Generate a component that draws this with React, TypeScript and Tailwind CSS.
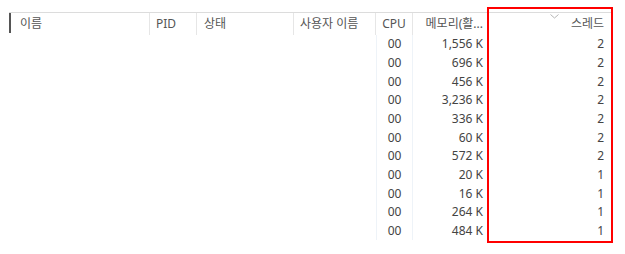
const rows = [
  { mem: '1,556 K', threads: 2 },
  { mem: '696 K', threads: 2 },
  { mem: '456 K', threads: 2 },
  { mem: '3,236 K', threads: 2 },
  { mem: '336 K', threads: 2 },
  { mem: '60 K', threads: 2 },
  { mem: '572 K', threads: 2 },
  { mem: '20 K', threads: 1 },
  { mem: '16 K', threads: 1 },
  { mem: '264 K', threads: 1 },
  { mem: '484 K', threads: 1 },
]

function HeaderCell({ label, className }: { label: string, className: string }) {
  return (
    <div className={`flex items-center h-full border-r border-[#e6e6e6] ${className}`}>
      {label}
    </div>
  )
}

export default function App() {
  return (
    <div
      className="relative w-[625px] h-[254px] bg-white text-[12px] text-[#444] overflow-hidden"
      style={{ fontFamily: '"Noto Sans", "Noto Sans CJK KR", sans-serif' }}
    >
      <div className="pt-[12px] pl-[9px]">
        {/* header */}
        <div className="flex h-[23px] w-[603px] border-t border-[#dcdcdc] text-[#555]">
          <div className="w-[2px] h-[20px] bg-[#555]" />
          <HeaderCell label="이름" className="w-[139px] pl-[9px]" />
          <HeaderCell label="PID" className="w-[47px] pl-[6px]" />
          <HeaderCell label="상태" className="w-[97px] pl-[7px]" />
          <HeaderCell label="사용자 이름" className="w-[82px] pl-[6px]" />
          <HeaderCell label="CPU" className="w-[37px] justify-center" />
          <div className="flex items-center justify-end h-full w-[75px] pr-[5px]">메모리(활...</div>
          <div className="relative flex items-center justify-end h-full w-[124px] pr-[8px]">
            스레드
            <svg className="absolute left-[62px] top-[1px]" width="9" height="5" viewBox="0 0 9 5">
              <path d="M0.5 0.5 L4.5 4 L8.5 0.5" fill="none" stroke="#b5b5b5" strokeWidth="1" />
            </svg>
          </div>
        </div>
        {/* body */}
        <div className="flex flex-col">
          {rows.map((r, i) => (
            <div key={i} className="flex h-[18.67px] items-center leading-none">
              <div className="w-[367px]" />
              <div className="w-[37px] h-full flex items-center justify-center border-x border-[#eef3f8]">00</div>
              <div className="w-[75px] text-right pr-[5px]">{r.mem}</div>
              <div className="w-[124px] text-right pr-[8px]">{r.threads}</div>
            </div>
          ))}
        </div>
      </div>
      {/* highlight box */}
      <div className="absolute left-[487px] top-[7px] w-[126px] h-[236px] border-2 border-[#ff0000]" />
    </div>
  )
}
